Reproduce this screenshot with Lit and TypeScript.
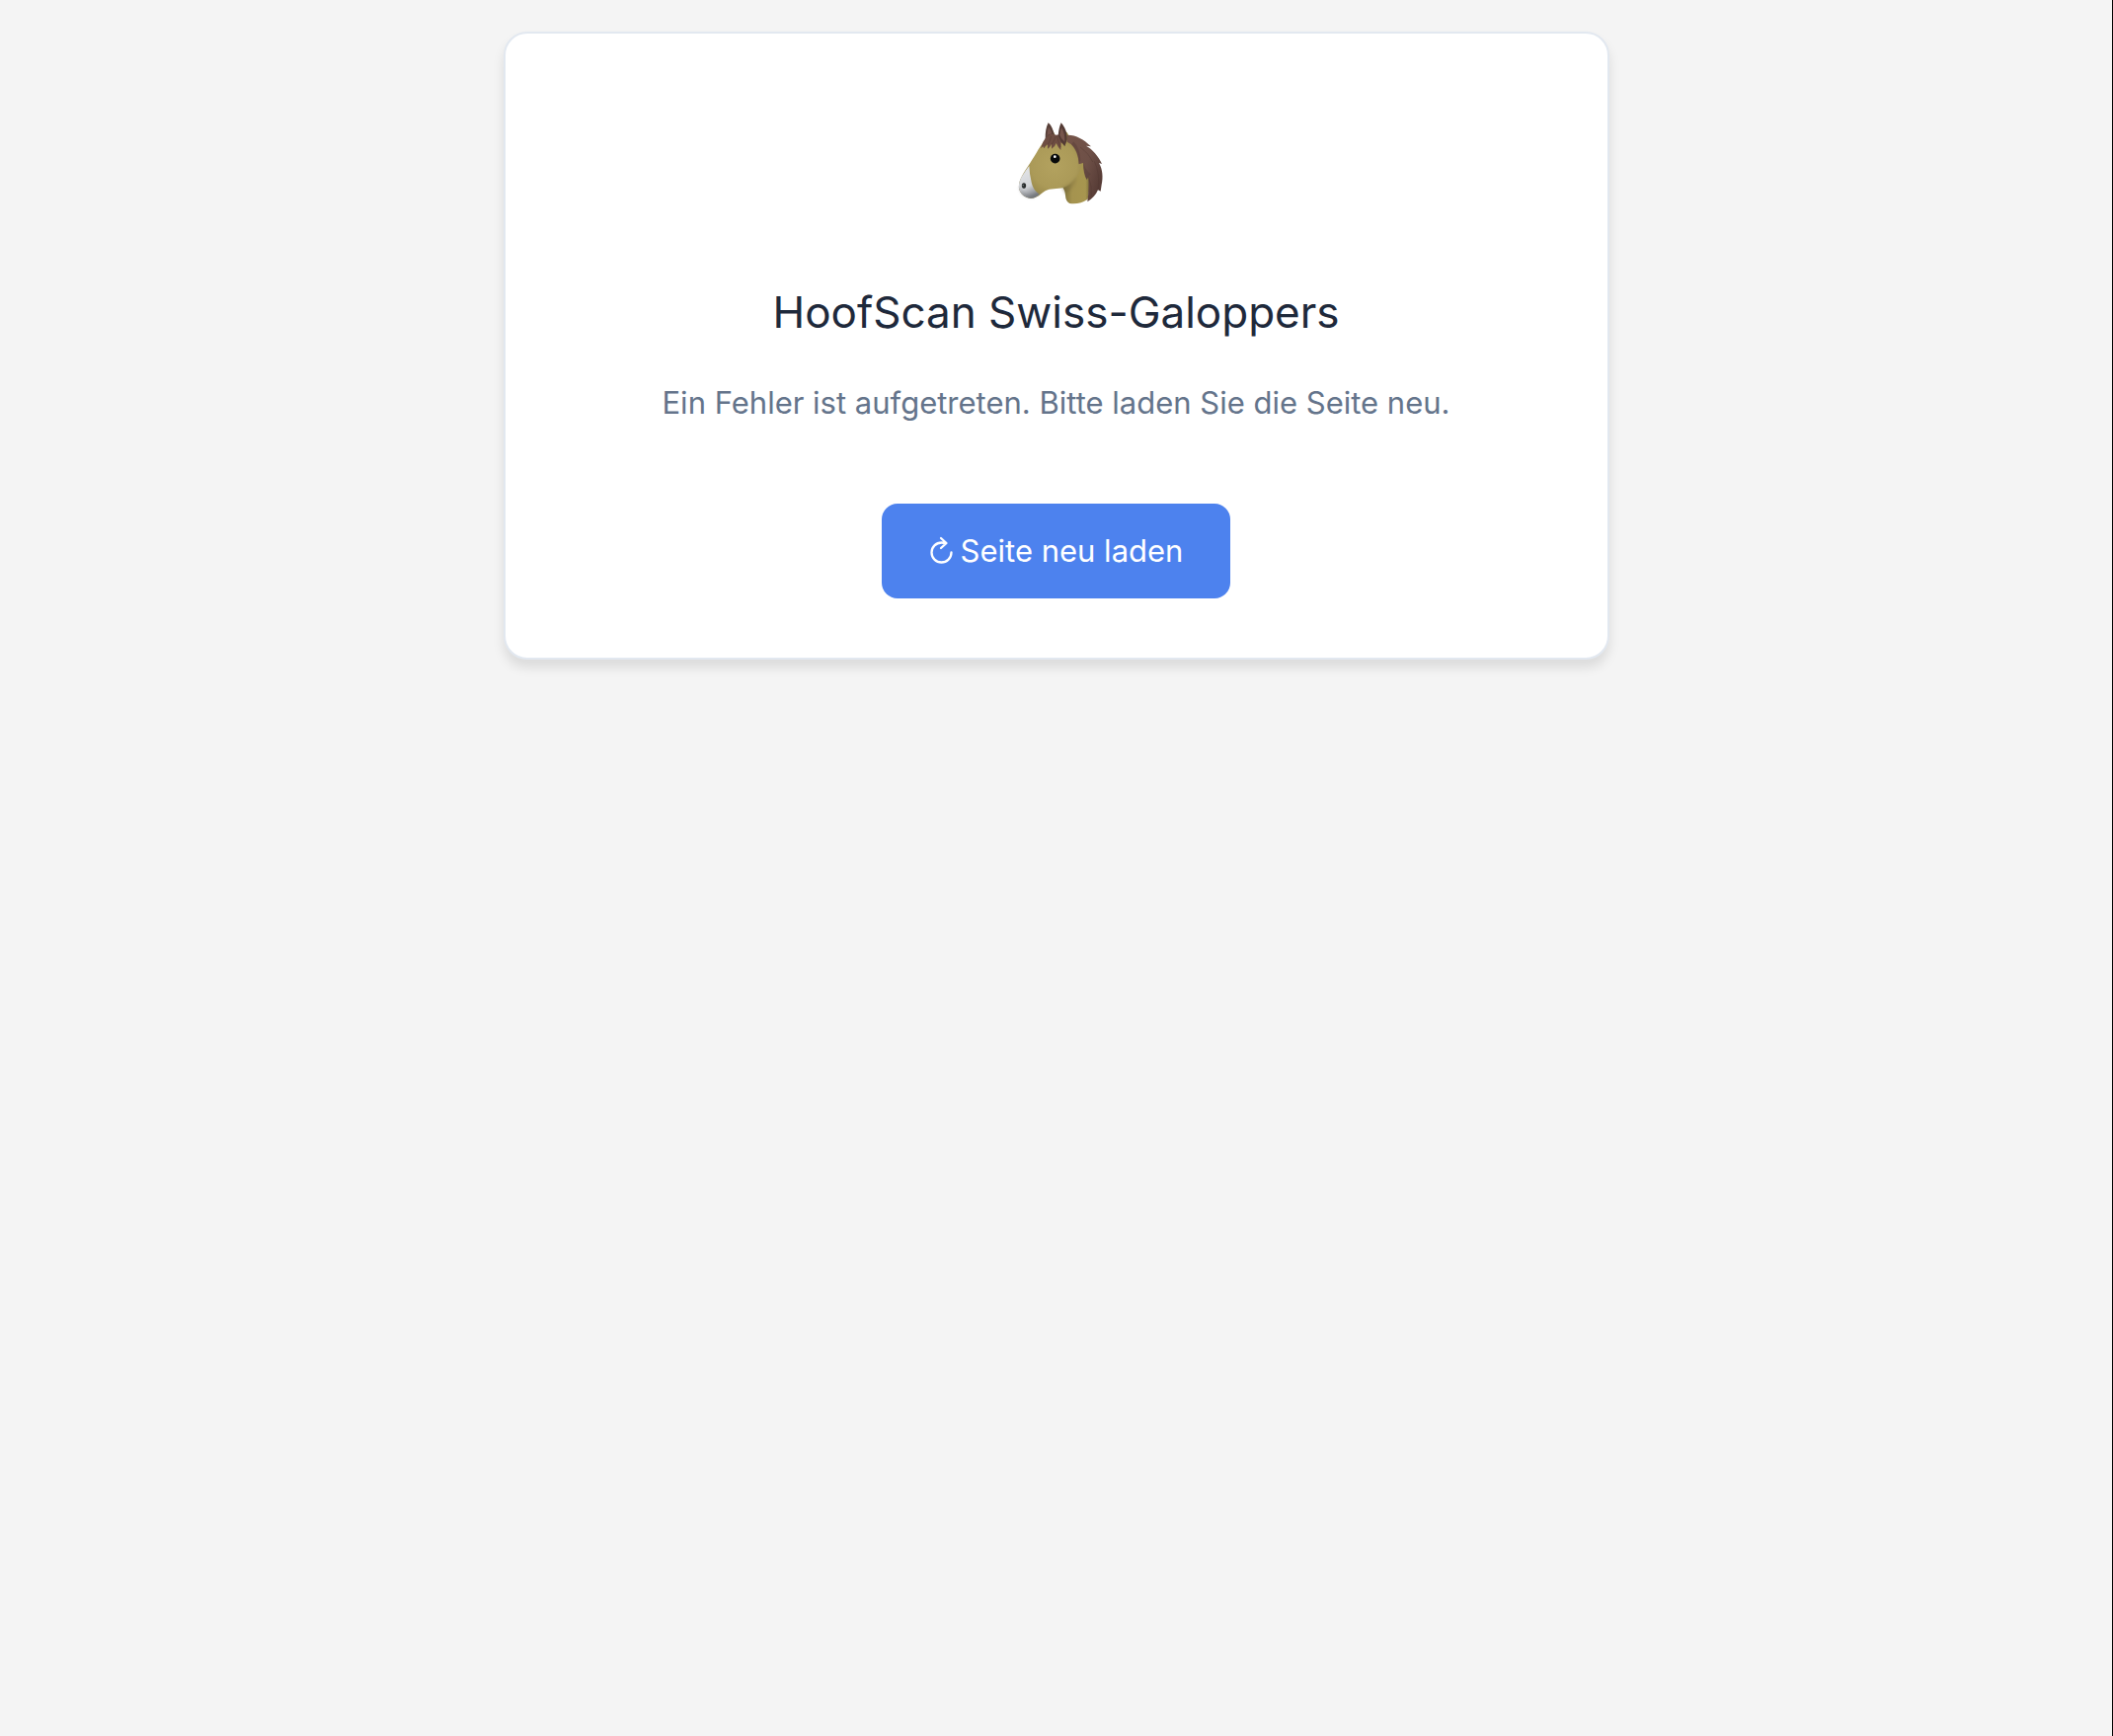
import { LitElement, html, css } from "lit";
import { customElement } from "lit/decorators.js";

@customElement("horse-logo")
export class HorseLogo extends LitElement {
  static styles = css`
    :host {
      display: block;
    }
    .logo {
      display: block;
      width: 120px;
      height: 110px;
    }
  `;

  render() {
    return html`
      <svg class="logo" viewBox="0 0 360 330" role="img" aria-label="HoofScan">
        <defs>
          <radialGradient id="coat" gradientUnits="userSpaceOnUse" cx="172" cy="172" r="125">
            <stop offset="0" stop-color="#b3a25f" />
            <stop offset="0.55" stop-color="#ab9a58" />
            <stop offset="0.85" stop-color="#968648" />
            <stop offset="1" stop-color="#766936" />
          </radialGradient>
          <linearGradient id="neck" x1="0" y1="0" x2="1" y2="0">
            <stop offset="0" stop-color="#796d38" />
            <stop offset="0.35" stop-color="#a5934f" />
            <stop offset="0.8" stop-color="#a7964f" />
            <stop offset="1" stop-color="#6d6033" />
          </linearGradient>
          <linearGradient id="muzzle" x1="0.2" y1="0" x2="0.5" y2="1">
            <stop offset="0" stop-color="#e4e6e9" />
            <stop offset="0.65" stop-color="#d2d4d8" />
            <stop offset="1" stop-color="#7b7e83" />
          </linearGradient>
          <linearGradient id="mane" x1="0" y1="0" x2="1" y2="0.6">
            <stop offset="0" stop-color="#755449" />
            <stop offset="0.6" stop-color="#6e5047" />
            <stop offset="1" stop-color="#573c36" />
          </linearGradient>
          <filter id="soft" x="-30%" y="-30%" width="160%" height="160%">
            <feGaussianBlur stdDeviation="5" />
          </filter>
        </defs>
        <path fill="#9b8949" d="M196 68 Q216 66 218 90 L214 104 L190 96Z" />
        <path fill="#9b8949" d="M156 58 Q173 66 176 84 L168 94 L152 84Z" />
        <path
          fill="url(#neck)"
          d="M196 236 Q206 246 207 264 Q208 282 220 288 Q250 292 275 275 L286 206 L258 150 L206 160Z"
        />
        <path
          fill="url(#coat)"
          d="M150 90 C131 110 118 138 100 165 C86 187 69 209 66 231 C63 252 79 270 101 272
             C121 273 130 260 146 250 C160 242 182 244 202 240 C226 232 246 208 256 174
             C255 132 236 98 206 86 C188 79 164 80 150 90Z"
        />
        <path fill="#75683a" opacity="0.4" filter="url(#soft)" d="M196 240 Q224 232 242 206 Q230 246 207 258Z" />
        <path
          fill="url(#muzzle)"
          d="M97 174 C83 194 68 211 66 231 C63 252 79 270 101 272 C112 273 121 267 128 260
             C112 248 106 236 103 218 Q98 198 97 174Z"
        />
        <path fill="none" stroke="#5d6066" stroke-width="5" opacity="0.4" filter="url(#soft)" d="M68 238 Q76 269 106 268 L127 258" />
        <ellipse cx="81" cy="234" rx="6.5" ry="8.5" fill="#292d2e" />
        <circle cx="78.5" cy="233" r="2" fill="#899095" />
        <path
          fill="url(#mane)"
          d="M213 80 C237 79 263 93 285 115 L270 113 C290 124 308 145 318 168 L309 165
             C320 184 322 209 317 231 L314 251 L306 247 C299 263 289 273 274 283
             Q279 249 277 207 L272 216 Q262 199 261 165 L248 169 C248 145 239 122 225 109
             L212 101Z"
        />
        <path fill="#4c332f" opacity="0.3" d="M232 100 Q251 120 253 155 L248 169 Q246 132 225 109Z" />
        <path fill="#4b322e" opacity="0.25" d="M261 165 Q270 190 284 199 L276 208 L272 216 Q261 199 261 165Z" />
        <path fill="none" stroke="#4c332f" stroke-width="3" opacity="0.35" d="M252 117 Q278 136 290 162 M277 207 Q289 236 286 266 M295 160 Q313 195 306 247" />
        <path
          fill="#6e4d42"
          d="M154 79 Q164 72 178 80 L197 78 Q205 85 203 108 L194 103 L193 126 Q185 118 179 105
             Q176 115 165 122 L165 108 Q160 118 153 122 L153 109 Q146 114 142 121 L139 115 L132 121
             Q137 101 146 90Z"
        />
        <path fill="none" stroke="#4d352e" stroke-width="2" opacity="0.65" d="M164 84 Q160 100 154 109 M177 85 Q173 99 166 108 M181 83 Q187 104 192 117" />
        <path fill="#584039" d="M155 43 C165 51 170 65 173 78 L161 78 Q150 83 146 92 C146 72 148 56 155 43Z" />
        <path fill="#76544c" d="M156 56 Q163 64 166 76 L156 79 L151 84 Q152 69 156 56Z" />
        <path fill="#533a34" d="M194 43 C206 56 214 77 212 95 L205 115 Q190 99 185 82 Q187 58 194 43Z" />
        <path fill="#76554c" d="M195 57 Q206 75 205 101 Q193 91 190 80 Q192 65 195 57Z" />
        <circle cx="176" cy="152" r="14.5" fill="#080a0a" />
        <circle cx="175" cy="146" r="4" fill="#fff" />
      </svg>
    `;
  }
}

@customElement("app-root")
export class AppRoot extends LitElement {
  static styles = css`
    :host {
      display: block;
      box-sizing: border-box;
      min-height: 100vh;
      padding: 32px;
      border-right: 1px solid #000;
      background: #f4f4f4;
      font-family: Inter, "Liberation Sans", sans-serif;
    }
    .card {
      display: flex;
      flex-direction: column;
      align-items: center;
      box-sizing: border-box;
      max-width: 1120px;
      margin: 0 auto;
      padding: 76px 60px 60px;
      border: 2px solid #e2e8f0;
      border-radius: 24px;
      background: #fff;
      box-shadow: 0 8px 12px rgba(0, 0, 0, 0.1);
      text-align: center;
    }
    .title {
      margin: 64px 0 0;
      color: #1e293b;
      font-size: 44px;
      font-weight: 400;
      line-height: 64px;
    }
    .message {
      margin: 36px 0 78px;
      color: #64748b;
      font-size: 31px;
      line-height: 48px;
    }
    .reload {
      display: flex;
      align-items: center;
      gap: 8px;
      padding: 24px 48px;
      border: 0;
      border-radius: 16px;
      background: #4d82ee;
      color: #fff;
      font: inherit;
      font-size: 31px;
      line-height: 48px;
      cursor: pointer;
    }
    .icon {
      width: 24px;
      height: 30px;
      fill: none;
      stroke: currentColor;
      stroke-width: 2.3;
      stroke-linecap: round;
      stroke-linejoin: round;
    }
  `;

  private reload() {
    window.location.reload();
  }

  render() {
    return html`
      <main class="card">
        <horse-logo></horse-logo>
        <h1 class="title">HoofScan Swiss-Galoppers</h1>
        <p class="message">Ein Fehler ist aufgetreten. Bitte laden Sie die Seite neu.</p>
        <button class="reload" type="button" @click=${this.reload}>
          <svg class="icon" viewBox="0 0 24 30" aria-hidden="true">
            <path d="M17 7 Q14.5 6.5 12.5 6.5 A10 10 0 1 0 22.5 16.5 M12 2 L17.5 7 L12 12" />
          </svg>
          <span>Seite neu laden</span>
        </button>
      </main>
    `;
  }
}
